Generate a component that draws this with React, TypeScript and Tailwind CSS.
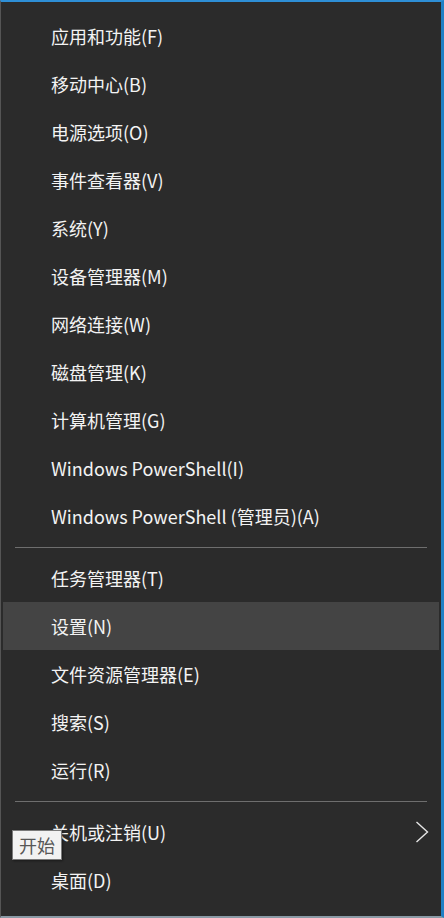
type Item = { label: string; active?: boolean; submenu?: boolean };

const groups: Item[][] = [
  [
    { label: "应用和功能(F)" },
    { label: "移动中心(B)" },
    { label: "电源选项(O)" },
    { label: "事件查看器(V)" },
    { label: "系统(Y)" },
    { label: "设备管理器(M)" },
    { label: "网络连接(W)" },
    { label: "磁盘管理(K)" },
    { label: "计算机管理(G)" },
    { label: "Windows PowerShell(I)" },
    { label: "Windows PowerShell (管理员)(A)" },
  ],
  [
    { label: "任务管理器(T)" },
    { label: "设置(N)", active: true },
    { label: "文件资源管理器(E)" },
    { label: "搜索(S)" },
    { label: "运行(R)" },
  ],
  [{ label: "关机或注销(U)", submenu: true }, { label: "桌面(D)" }],
];

function MenuRow({ item }: { item: Item }) {
  return (
    <div
      className={`flex h-[48px] items-center justify-between pl-[48px] pr-[10px] ${
        item.active ? "bg-[#444444]" : ""
      }`}
    >
      <span className="text-[18px] leading-none text-[#f3f3f3]">{item.label}</span>
      {item.submenu && (
        <svg width="14" height="24" viewBox="0 0 14 24" fill="none" className="text-[#e6e6e6]">
          <polyline points="1.5,2 12.5,12 1.5,22" stroke="currentColor" strokeWidth="1.4" />
        </svg>
      )}
    </div>
  );
}

export default function App() {
  return (
    <div
      className="relative h-[918px] w-[444px] overflow-hidden border-t-[2px] border-r-[3px] border-b-[2px] border-l border-t-[#2e8fd6] border-r-[#1f7fc4] border-b-[#8a9aa6] border-l-[#555555] bg-[#2b2b2b]"
      style={{ fontFamily: '"Noto Sans CJK SC", "Noto Sans", sans-serif' }}
    >
      <div className="flex flex-col px-[2px] pt-[10px]">
        {groups.map((group, gi) => (
          <div key={gi} className="flex flex-col">
            {gi > 0 && (
              <div className="flex h-[14px] flex-col px-[12px] pt-[7px]">
                <div className="h-px bg-[#6e6e6e]" />
              </div>
            )}
            {group.map((item) => (
              <MenuRow key={item.label} item={item} />
            ))}
          </div>
        ))}
      </div>

      {/* tooltip over the power row */}
      <div className="absolute left-[11px] top-[828px] flex h-[30px] w-[50px] items-center justify-center border border-[#7a7a7a] bg-[#f2f2f2] shadow-[1px_1px_2px_rgba(0,0,0,0.4)]">
        <span className="text-[18px] leading-none text-[#575757]">开始</span>
      </div>
    </div>
  );
}
